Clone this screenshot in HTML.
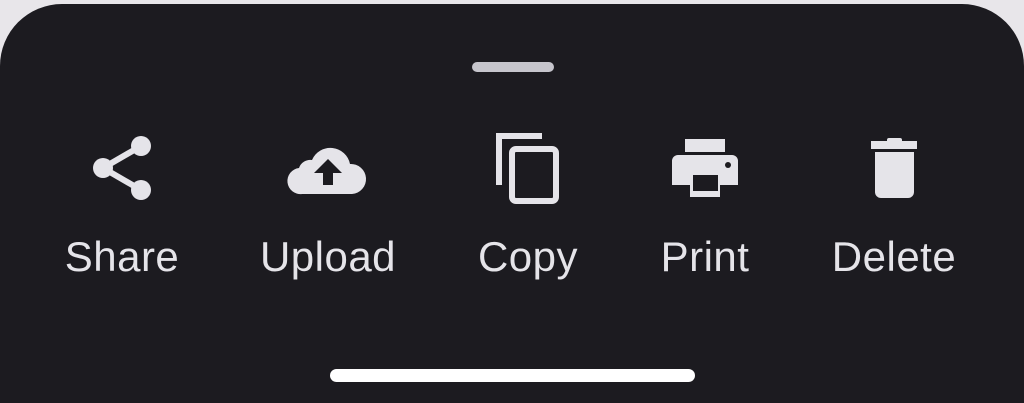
<!DOCTYPE html>
<html><head><meta charset="utf-8"><style>
html,body{margin:0;padding:0;width:1024px;height:403px;overflow:hidden;background:#e8e6ea;position:relative}
.sheet{position:absolute;left:0;top:4px;width:1024px;height:399px;background:#1c1b20;border-radius:62px 62px 0 0}
.grab{position:absolute;left:472px;top:62px;width:82px;height:10px;border-radius:5px;background:#c6c5cc}
.home{position:absolute;left:330px;top:369px;width:365px;height:13px;border-radius:7px;background:#fff}
.lbl{position:absolute;top:233px;font:42px "Liberation Sans",sans-serif;color:#e5e4e9;letter-spacing:0.5px;transform:translateX(-50%);white-space:nowrap}
svg{position:absolute;left:0;top:0}
</style></head><body>
<div class="sheet"></div>
<div class="grab"></div>
<svg width="1024" height="403" fill="#e5e4e9">
<g stroke="#e5e4e9" stroke-width="6"><line x1="103" y1="168" x2="141" y2="146"/><line x1="103" y1="168" x2="141" y2="190"/></g>
<circle cx="103" cy="168" r="10"/><circle cx="141" cy="146" r="10"/><circle cx="141" cy="190" r="10"/>
<path d="M302 194 a13 13 0 0 1 -3 -26 a12 12 0 0 1 13 -8 a20 20 0 0 1 38 4 a15 15 0 0 1 2 30 z"/>
<path d="M328 159 l-14 14 h9 v12 h10 v-12 h9 z" fill="#1c1b20"/>
<path d="M496 133 h46 v6 h-40 v46 h-6 z"/>
<rect x="512" y="149" width="44" height="52" rx="4" fill="none" stroke="#e5e4e9" stroke-width="6"/>
<rect x="685" y="139" width="40" height="13"/>
<path d="M678 155 h54 a6 6 0 0 1 6 6 v24 h-18 v12 h-30 v-12 h-18 v-24 a6 6 0 0 1 6 -6z"/>
<rect x="693" y="175" width="25" height="16" fill="#1c1b20"/>
<circle cx="728" cy="165" r="3" fill="#1c1b20"/>
<rect x="871" y="141" width="46" height="8"/>
<rect x="887" y="138" width="15" height="5" rx="2"/>
<path d="M875 152 h39 v40 a6 6 0 0 1 -6 6 h-27 a6 6 0 0 1 -6 -6z"/>
</svg>
<div class="lbl" style="left:122px">Share</div>
<div class="lbl" style="left:328px">Upload</div>
<div class="lbl" style="left:528px">Copy</div>
<div class="lbl" style="left:705px">Print</div>
<div class="lbl" style="left:894px">Delete</div>
<div class="home"></div>
</body></html>
